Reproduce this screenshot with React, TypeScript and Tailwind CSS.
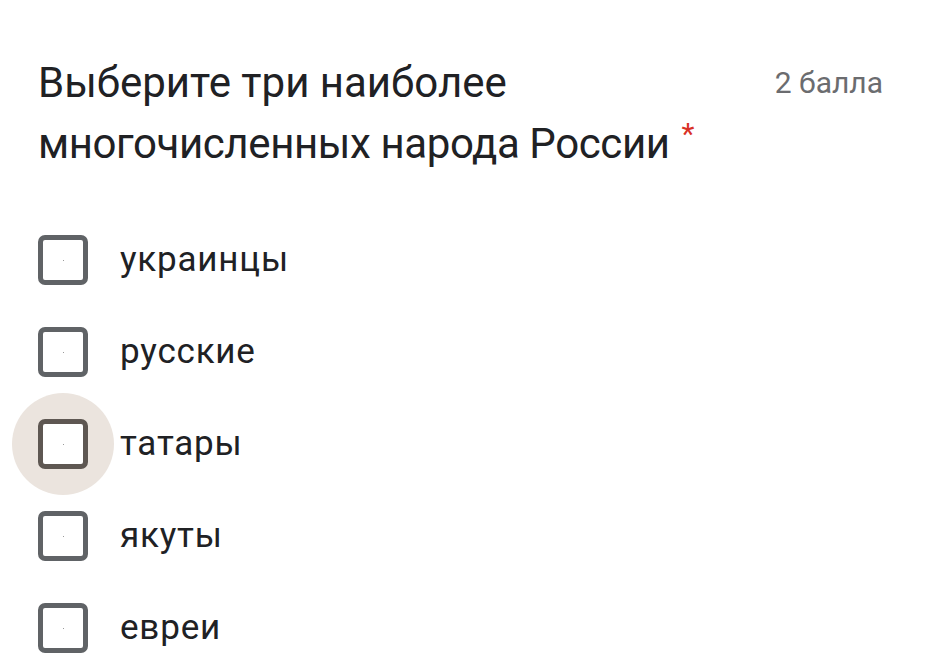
const options = ["украинцы", "русские", "татары", "якуты", "евреи"];

function Checkbox({ focused }: { focused?: boolean }) {
  return (
    <div className="relative w-[50px] h-[50px] flex-shrink-0">
      {focused && (
        <div className="absolute left-[-26px] top-[-26px] w-[102px] h-[102px] rounded-full bg-[#ebe4de]" />
      )}
      <div
        className={
          "relative w-[50px] h-[50px] rounded-[7px] border-[5px] bg-white flex items-center justify-center " +
          (focused ? "border-[#5e5752]" : "border-[#606366]")
        }
      >
        <div className="w-[1px] h-[1px] bg-[#9a9a9a]" />
      </div>
    </div>
  );
}

export default function App() {
  return (
    <div className="w-[929px] h-[672px] overflow-hidden bg-white font-['Roboto','Liberation_Sans',sans-serif]">
      {/* Question header */}
      <div className="flex items-start pl-[38px] pr-[46px] pt-[52px]">
        <h1 className="flex-1 text-[42px] leading-[61px] text-[#202124] font-normal">
          Выберите три наиболее
          <br />
          <span className="tracking-[-0.4px]">многочисленных народа России</span>
          <span className="relative top-[-14px] ml-[12px] text-[30px] text-[#d93025]">*</span>
        </h1>
        <div className="text-[30px] leading-[61px] text-[#6b6c6f]">2 балла</div>
      </div>

      {/* Options */}
      <div className="flex flex-col pl-[38px] mt-[36px]">
        {options.map((o, i) => (
          <div key={o} className="flex items-center h-[92px] gap-[32px]">
            <Checkbox focused={i === 2} />
            <span className="text-[35px] text-[#202124] tracking-[0.8px]">{o}</span>
          </div>
        ))}
      </div>
    </div>
  );
}
